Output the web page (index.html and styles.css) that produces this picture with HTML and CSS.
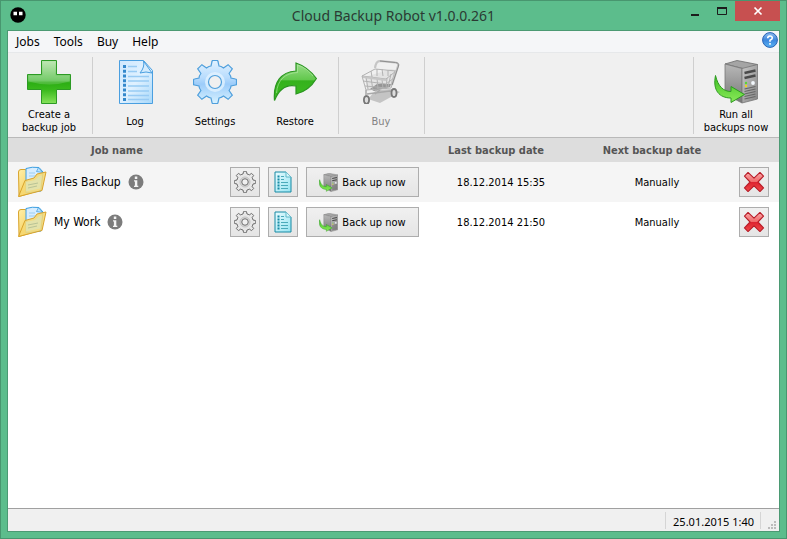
FILE: index.html
```html
<!DOCTYPE html>
<html lang="en">
<head>
<meta charset="utf-8">
<title>Cloud Backup Robot v1.0.0.261</title>
<link rel="stylesheet" href="styles.css">
</head>
<body>
<svg class="sprite" aria-hidden="true">
  <defs>
    <linearGradient id="green" x1="0" y1="0" x2="0" y2="1">
      <stop offset="0" stop-color="#b4e3a8"/><stop offset=".46" stop-color="#5cc24e"/>
      <stop offset=".52" stop-color="#2cae14"/><stop offset=".68" stop-color="#39b91c"/><stop offset="1" stop-color="#86e25a"/>
    </linearGradient>
    <linearGradient id="arrow" x1="0" y1="0" x2="0" y2="1">
      <stop offset="0" stop-color="#9ade8a"/><stop offset=".44" stop-color="#63c84e"/>
      <stop offset=".48" stop-color="#35b21d"/><stop offset="1" stop-color="#3dbc22"/>
    </linearGradient>
    <linearGradient id="lime" x1="0" y1="0" x2="0" y2="1">
      <stop offset="0" stop-color="#3fc022"/><stop offset="1" stop-color="#8bea5a"/>
    </linearGradient>
    <linearGradient id="blue" x1="0" y1="0" x2="1" y2="1">
      <stop offset="0" stop-color="#cfe7fe"/><stop offset=".5" stop-color="#e0f1ff"/><stop offset="1" stop-color="#a8d8fa"/>
    </linearGradient>
    <linearGradient id="gearblue" x1="0" y1="0" x2="0" y2="1">
      <stop offset="0" stop-color="#e2f2ff"/><stop offset=".4" stop-color="#b8dcfd"/><stop offset=".55" stop-color="#9cccfa"/><stop offset="1" stop-color="#d8f2ff"/>
    </linearGradient>
    <linearGradient id="cyan" x1="0" y1="0" x2="1" y2="1">
      <stop offset="0" stop-color="#e8fbff"/><stop offset="1" stop-color="#96e4f2"/>
    </linearGradient>
    <linearGradient id="steel" x1="0" y1="0" x2="0" y2="1">
      <stop offset="0" stop-color="#b8b8b8"/><stop offset="1" stop-color="#777"/>
    </linearGradient>
    <linearGradient id="front" x1="0" y1="0" x2="1" y2="1">
      <stop offset="0" stop-color="#c8c8c8"/><stop offset="1" stop-color="#858585"/>
    </linearGradient>
    <linearGradient id="gold" x1="0" y1="0" x2="1" y2="1">
      <stop offset="0" stop-color="#fff0a8"/><stop offset="1" stop-color="#efbd38"/>
    </linearGradient>
    <linearGradient id="red" x1="0" y1="0" x2="0" y2="1">
      <stop offset="0" stop-color="#f9a8a8"/><stop offset=".48" stop-color="#f06a6a"/><stop offset=".52" stop-color="#de2430"/><stop offset="1" stop-color="#f04848"/>
    </linearGradient>
    <linearGradient id="help" x1="0" y1="0" x2="0" y2="1">
      <stop offset="0" stop-color="#8fbdf0"/><stop offset=".5" stop-color="#3d86dd"/><stop offset="1" stop-color="#58b4f4"/>
    </linearGradient>
  </defs>

  <symbol id="i-plus" viewBox="0 0 44 44">
    <path d="M14.5.5h15v14h14v15h-14v14h-15v-14H.5v-15h14z" fill="url(#green)" stroke="#2c9a24"/>
    <path d="M15.5 1.500h13v14h14v6q-20 6-41 0v-6h14z" fill="#fff" opacity=".16"/>
  </symbol>

  <symbol id="i-log" viewBox="0 0 44 44">
    <path d="M6.500.5h24l9 10v33h-33z" fill="url(#blue)" stroke="#4a9fe0"/>
    <path d="M30.500 1l8.500 12q-6-2-12 0 5-6 3.500-12z" fill="#d4ebfd" stroke="#4a9fe0"/>
    <path d="M15 6.500h9m-9 5h9m-9 5h21m-21 4.500h21m-21 5h21m-21 5h21m-21 4.500h21m-21 4h21" stroke="#98cbf4" stroke-width="1.400"/>
    <path d="M11.500 5v36" stroke="#3488cc" stroke-width="3" stroke-dasharray="3 1.710"/>
  </symbol>

  <symbol id="i-gear" viewBox="0 0 44 44">
    <g transform="translate(22 22)">
      <path d="M-4-16L-3-20.500Q-3-21.500-2-21.500H2Q3-21.500 3-20.500L4-16Q6-16 8.500-14.100L13.100-17.300 17.300-13.100 14.100-8.500Q16-6 16-4L20.500-3Q21.500-3 21.500-2V2Q21.500 3 20.500 3L16 4Q16 6 14.100 8.500L17.300 13.100 13.100 17.300 8.500 14.100Q6 16 4 16L3 20.500Q3 21.500 2 21.500H-2Q-3 21.500-3 20.500L-4 16Q-6 16-8.500 14.100L-13.100 17.300-17.300 13.100-14.100 8.500Q-16 6-16 4L-20.500 3Q-21.500 3-21.500 2V-2Q-21.500-3-20.500-3L-16-4Q-16-6-14.100-8.500L-17.300-13.100-13.100-17.300-8.500-14.100Q-6-16-4-16Z" class="gear-body"/>
      <circle r="10" class="gear-ring"/>
      <circle r="6.500" class="gear-hole"/>
    </g>
  </symbol>

  <symbol id="i-restore" viewBox="0 0 44 44">
    <path d="M1.500 40.500C0 22 8 12 23 11V3Q35 7 43.400 18.500 36 31 23 34V26C13 24 6 29 1.500 40.500z" fill="url(#arrow)" stroke="#2a9520" stroke-width="1.200"/>
    <path d="M3.500 33C4.500 20 12 13 24.500 12.500V5Q34 8 40 16" fill="none" stroke="#b5eaa6" opacity=".6"/>
  </symbol>

  <symbol id="i-cart" viewBox="0 0 44 44">
    <path d="M9 39l8-9 16-1 8 3-20 11z" fill="#b9b9b9" opacity=".8"/>
    <path d="M6 17l26-8 5 1-5 17-24 3z" fill="#e3e3e3"/>
    <path d="M11 29l7-5 14 0-1 3-16 4z" fill="#959595"/>
    <path d="M3 16l13-7 21 2-5 17-25 2zM3 16l24 3 10-8M4 21l23 3 8-6M6 26l22 2M7 17l2 12m3-11l2 12m4-12l1 11m4-10l1 10m4-11l-1 11m5-15l-3 13m7-16l-4 14M12 11l1 6m5-8v7m5-7l1 7m5-6v6" fill="none" stroke="#b2b2b2"/>
    <path d="M4 17l23 3M33 25L39 6q1-3-3-3.500L21 1q-4 0-5 7" fill="none" stroke="#c6c6c6" stroke-width="2.200"/>
    <path d="M33 25L39.500 6q1-3-3-3.500L21 1" fill="none" stroke="#8d8d8d"/>
    <path d="M7 30v5l2 4m-1-5l23-3 4 1M16 34l5-4" fill="none" stroke="#a8a8a8" stroke-width="1.500"/>
    <ellipse cx="7.500" cy="40" rx="2.600" ry="3.800" fill="#ddd" stroke="#777" stroke-width="1.800"/>
    <ellipse cx="35" cy="33" rx="2.500" ry="4" fill="#ddd" stroke="#777" stroke-width="1.800"/>
  </symbol>

  <symbol id="i-server" viewBox="0 0 44 44">
    <path d="M11 4L23 .500 43.500 4.500 31 9z" fill="#a5a5a5" stroke="#6b6b6b" stroke-width=".8"/>
    <path d="M11 4l17 4.500V43L11 34z" fill="url(#steel)" stroke="#777" stroke-width=".8"/>
    <path d="M28 8.500L43.500 4.500V39L28 43z" fill="url(#front)" stroke="#777" stroke-width=".8"/>
    <path d="M30.500 13l11-2.500m-11 7.500l11-2.500" stroke="#4b4b4b" stroke-width="2.400"/>
    <path d="M30.500 29l11-2.500m-11 5l11-2.500m-11 5l11-2.500m-11 5l11-2.500m-11 5l11-2.500" stroke="#666" stroke-width="1.200"/>
    <circle cx="32" cy="23" r="1.200" fill="#56d834"/><circle cx="32" cy="26" r="1.200" fill="#f3d21c"/>
    <circle cx="39" cy="23" r="1.900" fill="#f2f7fc"/>
    <path d="M1.500 15.500C-1.500 30 5 38 17 38v4.500L30.500 34.500 17 26.500v5C9 31.500 4 26 1.500 15.500z" fill="url(#lime)" stroke="#2c9a20"/>
  </symbol>

  <symbol id="i-folder" viewBox="0 0 30 32">
    <path d="M1.500 6Q1.500 3.500 4 3.500H8L13 6 24 4V24L2 30.500z" fill="url(#gold)" stroke="#d9a42c"/>
    <path d="M9 2.500Q15 .500 22 1.500L26 6 24 25 9 27z" fill="#d6edff" stroke="#3c9ee0"/>
    <path d="M21.500 1.500l4 5-6-1z" fill="#bde2fb" stroke="#3c9ee0" stroke-width=".7"/>
    <path d="M12 7h6m-6 3h8" stroke="#9dcdf0"/>
    <path d="M1.500 30.500L8 14.500 17 12 20 8 29 6 25 24.500z" fill="#f6d873" fill-opacity=".88" stroke="#d9a42c" stroke-linejoin="round"/>
    <path d="M9 16l9-2 4-4 3-.5-2 13-14 3z" fill="#dfe4b4" opacity=".8"/>
    <path d="M11 19l10-2m-10 5l9-2" stroke="#b9c396"/>
  </symbol>

  <symbol id="i-sheet" viewBox="0 0 18 22">
    <path d="M1 1H12L17 6V21H1z" fill="url(#cyan)" stroke="#168aa4"/>
    <path d="M12 1v5h5" fill="#d8f6fb" stroke="#5fb8c8"/>
    <path d="M7 5.500h3m-3 3h3m-3 3h7m-7 3h7m-7 3h7" stroke="#4aaabb"/>
    <path d="M4.500 4.500v14" stroke="#168aa4" stroke-width="2" stroke-dasharray="2 1"/>
  </symbol>

  <symbol id="i-delete" viewBox="0 0 24 24">
    <path d="M1.600 5.500L5.500 1.600 12 7.700 18.500 1.600 22.400 5.500 16.300 12 22.400 18.500 18.500 22.400 12 16.300 5.500 22.400 1.600 18.500 7.700 12z" fill="url(#red)" stroke="#b81c28" stroke-width="1.200" stroke-linejoin="round"/>
  </symbol>

  <symbol id="i-info" viewBox="0 0 16 16">
    <circle cx="8" cy="8" r="7.500" fill="#7c7c7c"/>
    <path d="M6.800 2.500h2.500V5H6.800zM6 6.200h3.300v5.600h1V13H6v-1.200h.9V7.400H6z" fill="#f4f4f4"/>
  </symbol>
</svg>

<div class="window">
  <header class="titlebar">
    <svg class="app-icon" viewBox="0 0 16 16" aria-hidden="true"><circle cx="8" cy="8" r="7.700"/><path d="M3.500 4.700h3.500v3.500H3.500zM9 4.700h3.500v3.500H9z" fill="#fff"/></svg>
    <h1>Cloud Backup Robot v1.0.0.261</h1>
    <div class="controls">
      <button type="button" aria-label="Minimize"><svg viewBox="0 0 10 10"><path d="M1 9h8" stroke="#1c1c1c" stroke-width="2"/></svg></button>
      <button type="button" aria-label="Maximize"><svg viewBox="0 0 10 10"><path d="M.5 2v6.500h9V2" fill="none" stroke="#1c1c1c"/><path d="M0 2h10" stroke="#1c1c1c" stroke-width="2"/></svg></button>
      <button type="button" class="close" aria-label="Close"><svg viewBox="0 0 10 10"><path d="M1.500 1.500l7 7m0-7l-7 7" stroke="#fff" stroke-width="1.700"/></svg></button>
    </div>
  </header>

  <div class="client">
    <nav class="menubar">
      <button type="button">Jobs</button>
      <button type="button">Tools</button>
      <button type="button">Buy</button>
      <button type="button">Help</button>
      <button type="button" class="help" aria-label="Help contents"><svg viewBox="0 0 16 16"><circle cx="8" cy="8" r="7.400" fill="url(#help)" stroke="#2a62b4"/><path d="M5.700 6.300Q5.700 4 8 4t2.300 2.100Q10.300 7.500 8 8.300v1.500M8 11v1.800" fill="none" stroke="#fff" stroke-width="1.600"/></svg></button>
    </nav>

    <div class="toolbar">
      <button type="button"><svg><use href="#i-plus"/></svg><span>Create a<br>backup job</span></button>
      <i class="sep"></i>
      <button type="button"><svg><use href="#i-log"/></svg><span>Log</span></button>
      <button type="button"><svg class="gear-blue"><use href="#i-gear"/></svg><span>Settings</span></button>
      <button type="button"><svg><use href="#i-restore"/></svg><span>Restore</span></button>
      <i class="sep"></i>
      <button type="button" disabled><svg><use href="#i-cart"/></svg><span>Buy</span></button>
      <i class="sep"></i>
      <i class="sep push"></i>
      <button type="button"><svg><use href="#i-server"/></svg><span>Run all<br>backups now</span></button>
    </div>

    <main>
      <table>
        <colgroup><col class="c-name"><col class="c-actions"><col class="c-last"><col class="c-next"><col class="c-delete"></colgroup>
        <thead>
          <tr><th>Job name</th><th></th><th>Last backup date</th><th>Next backup date</th><th></th></tr>
        </thead>
        <tbody>
          <tr>
            <td><div class="job"><svg class="folder"><use href="#i-folder"/></svg><span>Files Backup</span><svg class="info"><use href="#i-info"/></svg></div></td>
            <td><div class="actions">
              <button type="button" class="square" aria-label="Job settings"><svg class="gear-gray"><use href="#i-gear"/></svg></button>
              <button type="button" class="square" aria-label="Job log"><svg><use href="#i-sheet"/></svg></button>
              <button type="button" class="run"><svg><use href="#i-server"/></svg><span>Back up now</span></button>
            </div></td>
            <td class="when">18.12.2014 15:35</td>
            <td class="when">Manually</td>
            <td><div class="remove"><button type="button" class="square" aria-label="Delete job"><svg><use href="#i-delete"/></svg></button></div></td>
          </tr>
          <tr>
            <td><div class="job"><svg class="folder"><use href="#i-folder"/></svg><span>My Work</span><svg class="info"><use href="#i-info"/></svg></div></td>
            <td><div class="actions">
              <button type="button" class="square" aria-label="Job settings"><svg class="gear-gray"><use href="#i-gear"/></svg></button>
              <button type="button" class="square" aria-label="Job log"><svg><use href="#i-sheet"/></svg></button>
              <button type="button" class="run"><svg><use href="#i-server"/></svg><span>Back up now</span></button>
            </div></td>
            <td class="when">18.12.2014 21:50</td>
            <td class="when">Manually</td>
            <td><div class="remove"><button type="button" class="square" aria-label="Delete job"><svg><use href="#i-delete"/></svg></button></div></td>
          </tr>
        </tbody>
      </table>
    </main>

    <footer class="status">
      <time>25.01.2015 1:40</time>
      <svg class="grip" viewBox="0 0 10 10" aria-hidden="true"><path d="M7 0h2v2H7zM4 3h2v2H4zM7 3h2v2H7zM1 6h2v2H1zM4 6h2v2H4zM7 6h2v2H7z" fill="#bbb"/></svg>
    </footer>
  </div>
</div>
</body>
</html>
```
FILE: styles.css
```css
* { box-sizing: border-box; }

body {
  margin: 0;
  font-family: "DejaVu Sans Condensed", "Noto Sans", sans-serif;
  font-size: 11px;
  line-height: 13px;
  color: #000;
}

button {
  padding: 0;
  border: 0;
  background: none;
  font: inherit;
  color: inherit;
}

svg { display: block; flex: none; }
.sprite { position: absolute; width: 0; height: 0; }

.window {
  display: flex;
  flex-direction: column;
  min-height: 100vh;
  padding: 0 6px 6px;
  border: 1px solid #48966f;
  background: #5cbd8c;
}

/* Title bar */
.titlebar {
  display: grid;
  grid-template-columns: 1fr auto 1fr;
  height: 29px;
}
.app-icon { width: 16px; height: 16px; margin: 6px 3px; }
.titlebar h1 {
  margin: 0;
  font-family: "Noto Sans", sans-serif;
  font-size: 14px;
  font-weight: 400;
  line-height: 30px;
  color: #2b3a33;
}
.controls { display: flex; justify-content: flex-end; align-items: flex-start; }
.controls button {
  display: flex;
  align-items: center;
  justify-content: center;
  width: 27px;
  height: 20px;
}
.controls svg { width: 10px; height: 10px; }
.controls .close { width: 45px; background: #c75050; }

.client {
  flex: 1;
  display: flex;
  flex-direction: column;
  border: 1px solid #4b9a73;
  background: #fff;
}

/* Menu */
.menubar {
  display: flex;
  align-items: center;
  gap: 14px;
  height: 22px;
  padding: 0 1px 0 8px;
  border-bottom: 1px solid #e6e8ea;
  background: #f5f6f8;
  font-family: "Noto Sans", sans-serif;
  font-size: 12px;
}
.menubar .help { margin-left: auto; align-self: flex-start; }
.help svg { width: 16px; height: 16px; margin-top: 1px; }

/* Toolbar */
.toolbar {
  display: flex;
  padding: 4px 3px 3px 1px;
  border-bottom: 1px solid #b9b9b9;
  background: #f0f0f0;
}
.toolbar button {
  display: flex;
  flex-direction: column;
  align-items: center;
  gap: 4px;
  width: 80px;
  padding-top: 3px;
}
.toolbar svg { width: 44px; height: 44px; }
.toolbar span { display: flex; align-items: center; height: 26px; text-align: center; }
.toolbar button:disabled { color: #838383; }
.sep { width: 1px; margin: 0 2px 0 3px; background: #cfcfcf; }
.push { margin-left: auto; }

/* Gear, drawn in two colour schemes */
.gear-blue { --fill: url(#gearblue); --ring: #e2f2ff; --ring-line: none; --line: #4f9fdc; --weight: 1.2; }
.gear-gray { --fill: #e6e6e6; --ring: #d4d4d4; --ring-line: #bcbcbc; --line: #6e6e6e; --weight: 2; }
.gear-body { fill: var(--fill); stroke: var(--line); stroke-width: var(--weight); }
.gear-ring { fill: var(--ring); stroke: var(--ring-line); stroke-width: 2; opacity: .8; }
.gear-hole { fill: #f0f0f0; stroke: var(--line); stroke-width: var(--weight); }

/* Job list */
main { flex: 1; }
table { width: 100%; table-layout: fixed; border-collapse: collapse; }
.c-actions { width: 196px; }
.c-last { width: 148px; }
.c-next { width: 164px; }
.c-delete { width: 45px; }
th, td { padding: 0; text-align: center; }
th { height: 24px; background: #ddd; color: #555; }
td { height: 40px; }
.when { padding-left: 10px; }
tbody tr:nth-child(odd) { background: #f5f5f5; }

.job { display: flex; align-items: center; gap: 7px; padding-left: 9px; font-size: 12px; }
.folder { width: 30px; height: 32px; }
.info { width: 16px; height: 16px; }

.actions { display: flex; gap: 8px; padding-left: 4px; }
.remove { padding-left: 5px; }
.square, .run {
  display: flex;
  align-items: center;
  justify-content: center;
  height: 30px;
  border: 1px solid #adadad;
  background: linear-gradient(#f0f0f0, #e5e5e5);
}
.square { flex: none; width: 30px; }
.square svg { width: 22px; height: 22px; }
.run { flex: none; gap: 4px; width: 113px; }
.run svg { width: 19px; height: 19px; }

/* Status bar */
.status {
  display: flex;
  justify-content: flex-end;
  height: 23px;
  padding-top: 3px;
  border-top: 1px solid #a0a0a0;
  background: #f0f0f0;
}
.status time {
  padding: 0 6px 0 7px;
  border: solid #d5d5d5;
  border-width: 0 1px;
  margin-bottom: 2px;
  font-family: "Noto Sans", sans-serif;
  line-height: 19px;
}
.grip { width: 10px; height: 10px; margin: auto 2px 0 6px; }
```
